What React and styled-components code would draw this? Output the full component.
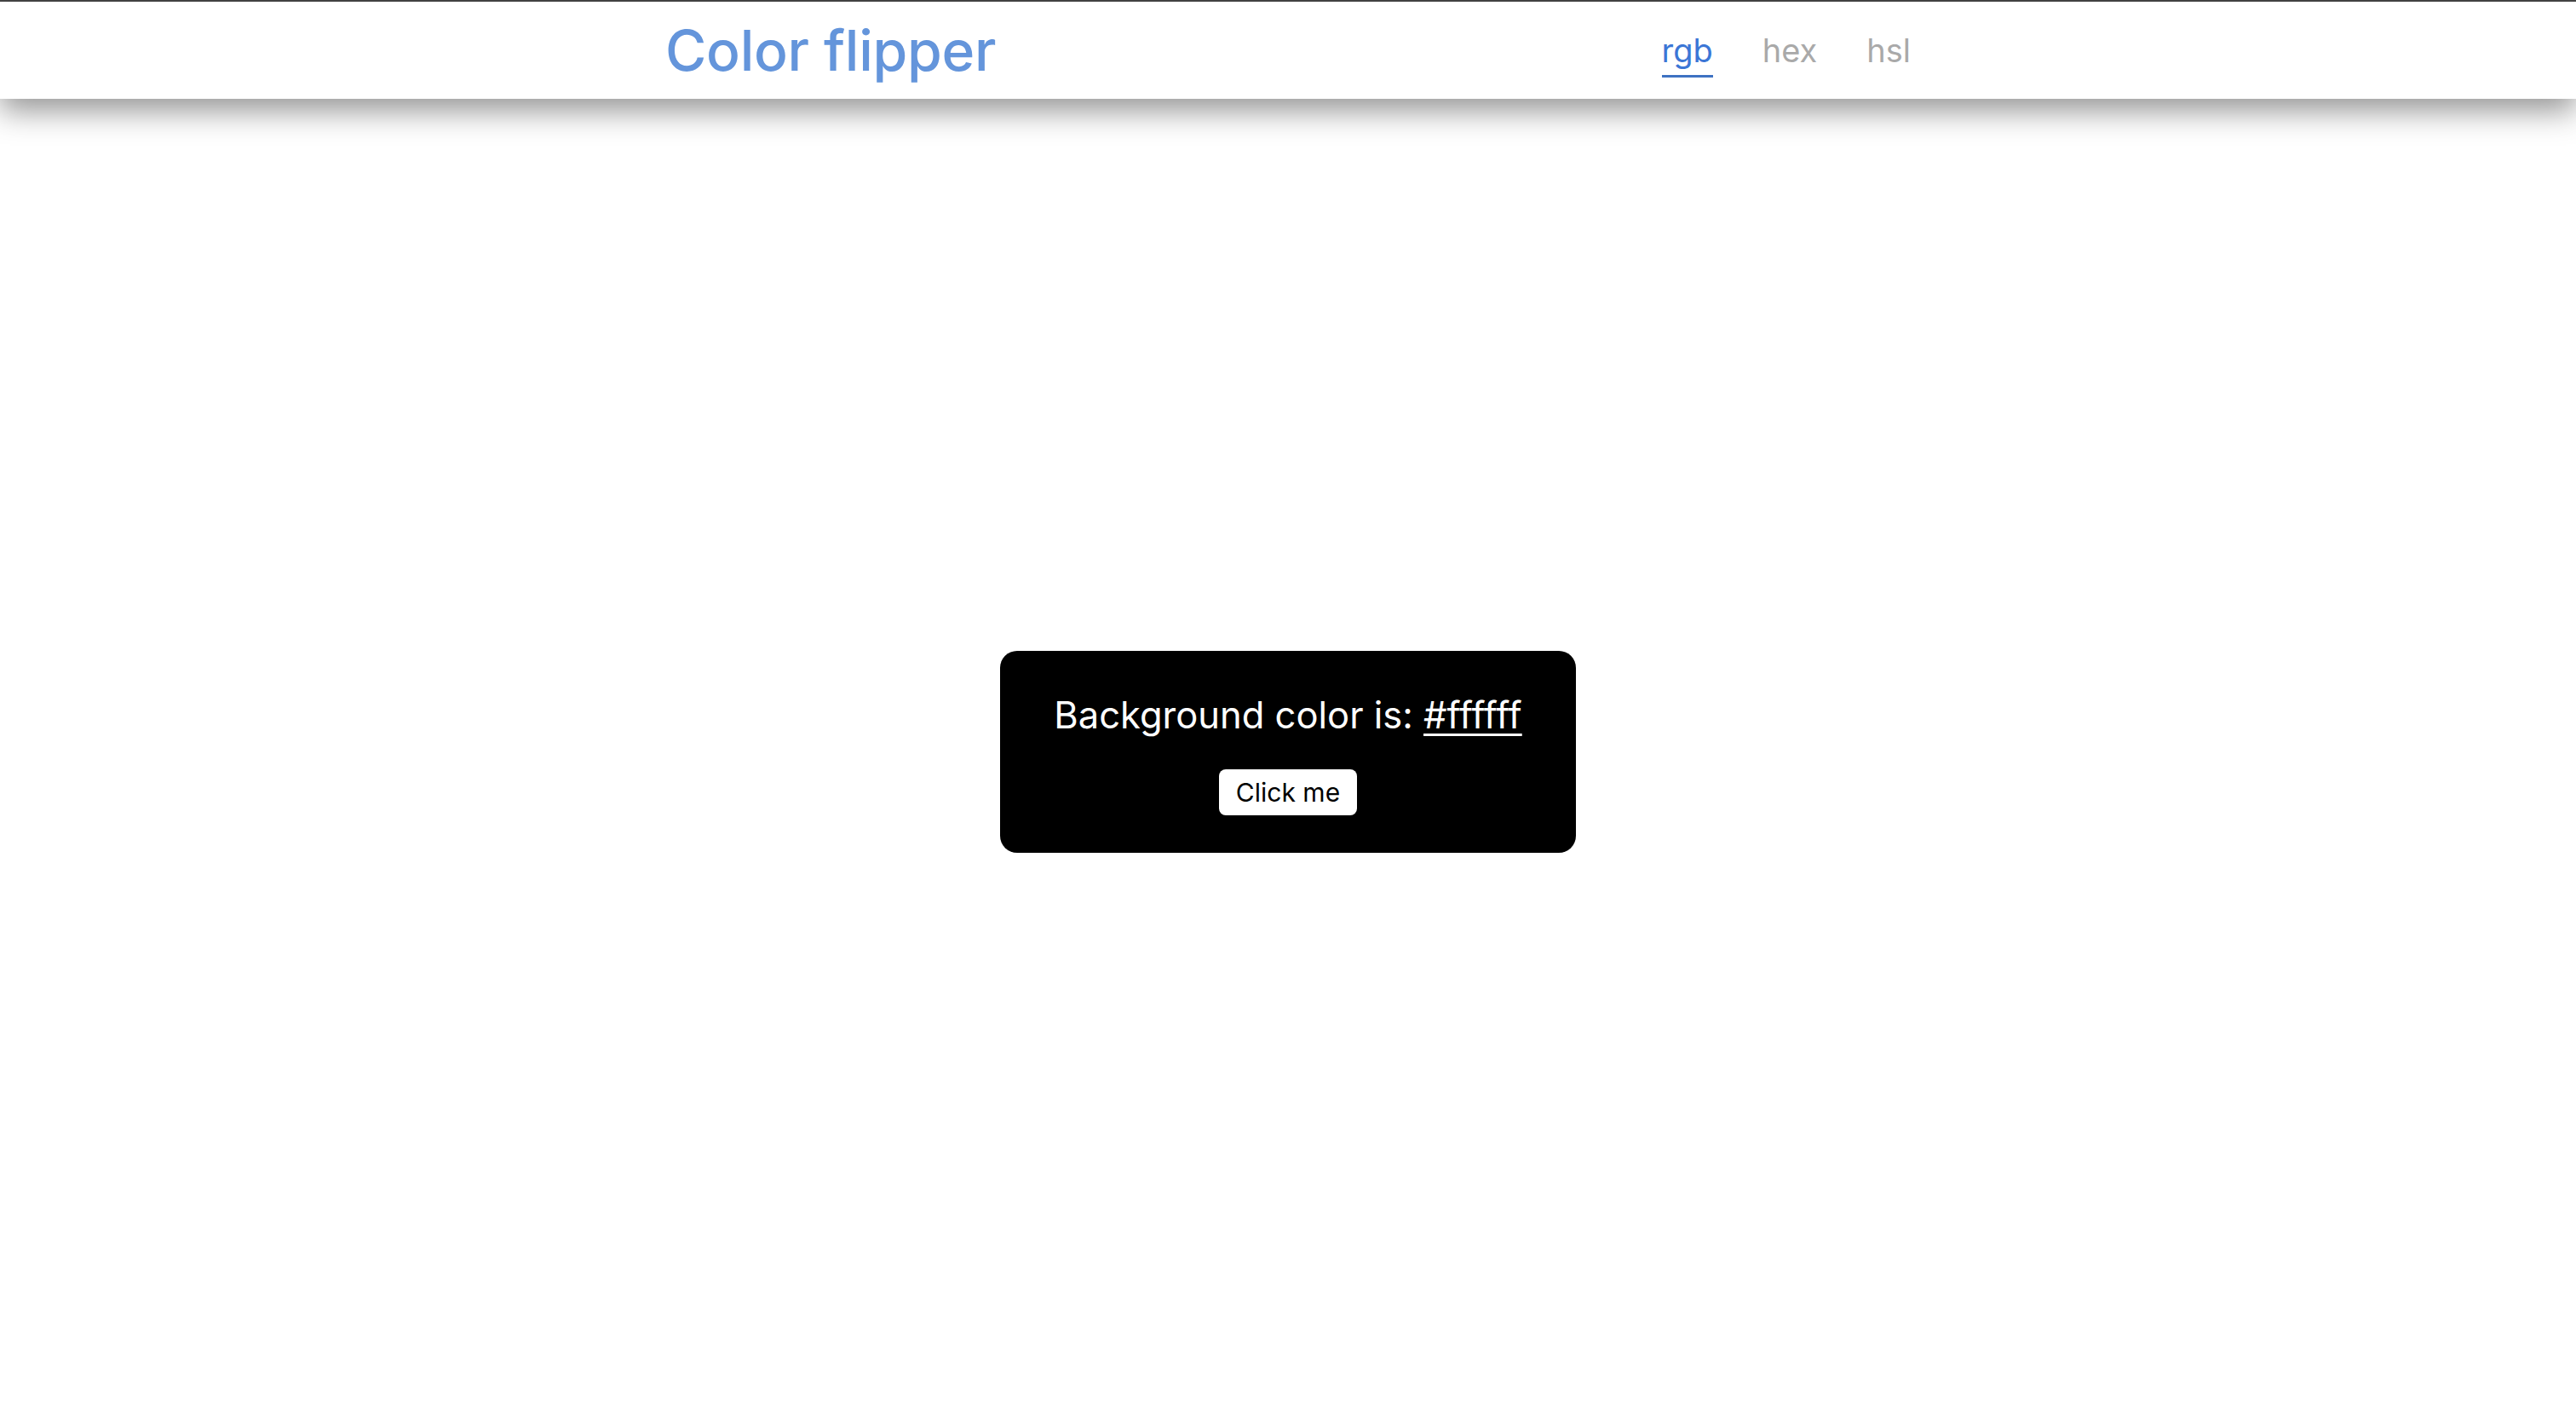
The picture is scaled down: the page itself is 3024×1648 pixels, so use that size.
import React, { useState } from "react";
import styled, { createGlobalStyle } from "styled-components";

const GlobalStyle = createGlobalStyle`
  * { box-sizing: border-box; }
  html, body, #root { margin: 0; padding: 0; height: 100%; }
  body {
    font-family: Inter, "Open Sans", "Liberation Sans", sans-serif;
    background: ${(props) => props.bg};
  }
`;

const modes = ["rgb", "hex", "hsl"];

const App = () => {
  const [mode, setMode] = useState("rgb");
  const [color] = useState("#ffffff");

  return (
    <Page>
      <GlobalStyle bg={color} />
      <Header>
        <HeaderInner>
          <Logo>Color flipper</Logo>
          <Nav>
            {modes.map((m) => (
              <NavLink key={m} active={mode === m} onClick={() => setMode(m)}>
                {m}
              </NavLink>
            ))}
          </Nav>
        </HeaderInner>
      </Header>
      <Main>
        <Card>
          <Message>
            Background color is: <Code>{color}</Code>
          </Message>
          <Button>Click me</Button>
        </Card>
      </Main>
    </Page>
  );
};

const Page = styled.div`
  display: flex;
  flex-direction: column;
  min-height: 100vh;
  border-top: 2px solid #474747;
`;

const Header = styled.header`
  height: 114px;
  background: #fff;
  box-shadow: 0 14px 34px rgba(0, 0, 0, 0.42);
  position: relative;
  z-index: 1;
`;

const HeaderInner = styled.div`
  width: 1462px;
  height: 100%;
  margin: 0 auto;
  display: flex;
  justify-content: space-between;
  align-items: center;
`;

const Logo = styled.h1`
  margin: 0;
  font-size: 66px;
  font-weight: 500;
  letter-spacing: -0.3px;
  color: #6495db;
`;

const Nav = styled.nav`
  display: flex;
  gap: 58px;
  align-items: center;
  padding-top: 12px;
`;

const NavLink = styled.span`
  font-size: 38px;
  font-weight: 400;
  cursor: pointer;
  color: ${(p) => (p.active ? "#3b76d6" : "#a9a9a9")};
  border-bottom: 3px solid ${(p) => (p.active ? "#3e72c2" : "transparent")};
  padding-bottom: 8px;
  line-height: 1.1;
`;

const Main = styled.main`
  flex: 1;
  display: flex;
  align-items: center;
  justify-content: center;
`;

const Card = styled.div`
  width: 676px;
  height: 237px;
  background: #000;
  border-radius: 20px;
  display: flex;
  flex-direction: column;
  align-items: center;
  justify-content: center;
  gap: 38px;
  padding-top: 6px;
`;

const Message = styled.h2`
  margin: 0;
  font-size: 43.5px;
  font-weight: 400;
  color: #fff;
  line-height: 1.2;
`;

const Code = styled.span`
  text-decoration: underline;
  text-decoration-thickness: 3px;
  text-underline-offset: 6px;
`;

const Button = styled.button`
  width: 162px;
  height: 54px;
  background: #fff;
  color: #000;
  border: none;
  border-radius: 8px;
  font-family: inherit;
  font-size: 30px;
  cursor: pointer;
`;

export default App;
